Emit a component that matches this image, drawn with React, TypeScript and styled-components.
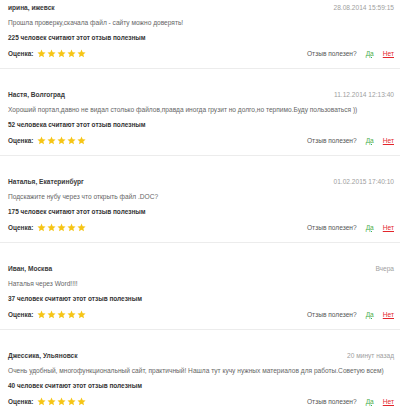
import React from "react";
import styled, { createGlobalStyle } from "styled-components";

const Global = createGlobalStyle`
  html, body { margin: 0; padding: 0; background: #fff; }
  body { font-family: "Liberation Sans", Arial, sans-serif; font-size: 6.6px; color: #333; }
`;

const List = styled.div`
  width: 400px;
  overflow: hidden;
`;

const Item = styled.div`
  padding: 18px 6px 7px 8px;
  border-bottom: 1px solid #ececec;
  &:first-child { padding-top: 0; }
`;

const Header = styled.div`
  display: flex;
  justify-content: space-between;
  align-items: center;
  height: 15px;
`;

const Name = styled.span`
  font-weight: bold;
  color: #3a3a3a;
`;

const DateText = styled.span`
  color: #a0a0a0;
`;

const Line = styled.div<{ $bold?: boolean }>`
  height: 15px;
  line-height: 15px;
  white-space: nowrap;
  color: ${(p) => (p.$bold ? "#333" : "#666")};
  font-weight: ${(p) => (p.$bold ? "bold" : "normal")};
  font-size: ${(p) => (p.$bold ? "6.45px" : "6.6px")};
`;

const Footer = styled.div`
  display: flex;
  justify-content: space-between;
  align-items: center;
  height: 16px;
`;

const Rating = styled.div`
  display: flex;
  align-items: center;
`;

const RatingLabel = styled.span`
  font-weight: bold;
  font-size: 6.45px;
  color: #333;
  margin-right: 4px;
`;

const Stars = styled.div`
  display: flex;
  gap: 1px;
`;

const Useful = styled.div`
  display: flex;
  align-items: center;
  color: #555;
`;

const Vote = styled.a<{ $yes?: boolean }>`
  margin-left: 9px;
  color: ${(p) => (p.$yes ? "#4cae4c" : "#e3262b")};
  text-decoration: underline;
  text-decoration-style: ${(p) => (p.$yes ? "dotted" : "solid")};
  cursor: pointer;
`;

const Star = () => (
  <svg width="9" height="9" viewBox="0 0 24 24">
    <path
      d="M12 1.5l3.1 7.1 7.7.7-5.8 5.1 1.7 7.6L12 18l-6.7 4 1.7-7.6L1.2 9.3l7.7-.7z"
      fill="#f6c515"
    />
  </svg>
);

const reviews = [
  {
    name: "ирина, ижевск",
    date: "28.08.2014 15:59:15",
    text: "Прошла проверку,скачала файл - сайту можно доверять!",
    count: "225 человек считают этот отзыв полезным",
  },
  {
    name: "Настя, Волгоград",
    date: "11.12.2014 12:13:40",
    text: "Хороший портал,давно не видал столько файлов,правда иногда грузит но долго,но терпимо.Буду пользоваться ))",
    count: "52 человека считают этот отзыв полезным",
  },
  {
    name: "Наталья, Екатеринбург",
    date: "01.02.2015 17:40:10",
    text: "Подскажите нубу через что открыть файл .DOC?",
    count: "175 человек считают этот отзыв полезным",
  },
  {
    name: "Иван, Москва",
    date: "Вчера",
    text: "Наталья через Word!!!!",
    count: "37 человек считают этот отзыв полезным",
  },
  {
    name: "Джессика, Ульяновск",
    date: "20 минут назад",
    text: "Очень удобный, многофункциональный сайт, практичный! Нашла тут кучу нужных материалов для работы.Советую всем)",
    count: "40 человек считают этот отзыв полезным",
  },
];

export default function App() {
  return (
    <>
      <Global />
      <List>
        {reviews.map((r, i) => (
          <Item key={i}>
            <Header>
              <Name>{r.name}</Name>
              <DateText>{r.date}</DateText>
            </Header>
            <Line>{r.text}</Line>
            <Line $bold>{r.count}</Line>
            <Footer>
              <Rating>
                <RatingLabel>Оценка:</RatingLabel>
                <Stars>
                  {[0, 1, 2, 3, 4].map((s) => (
                    <Star key={s} />
                  ))}
                </Stars>
              </Rating>
              <Useful>
                Отзыв полезен?
                <Vote $yes>Да</Vote>
                <Vote>Нет</Vote>
              </Useful>
            </Footer>
          </Item>
        ))}
      </List>
    </>
  );
}
